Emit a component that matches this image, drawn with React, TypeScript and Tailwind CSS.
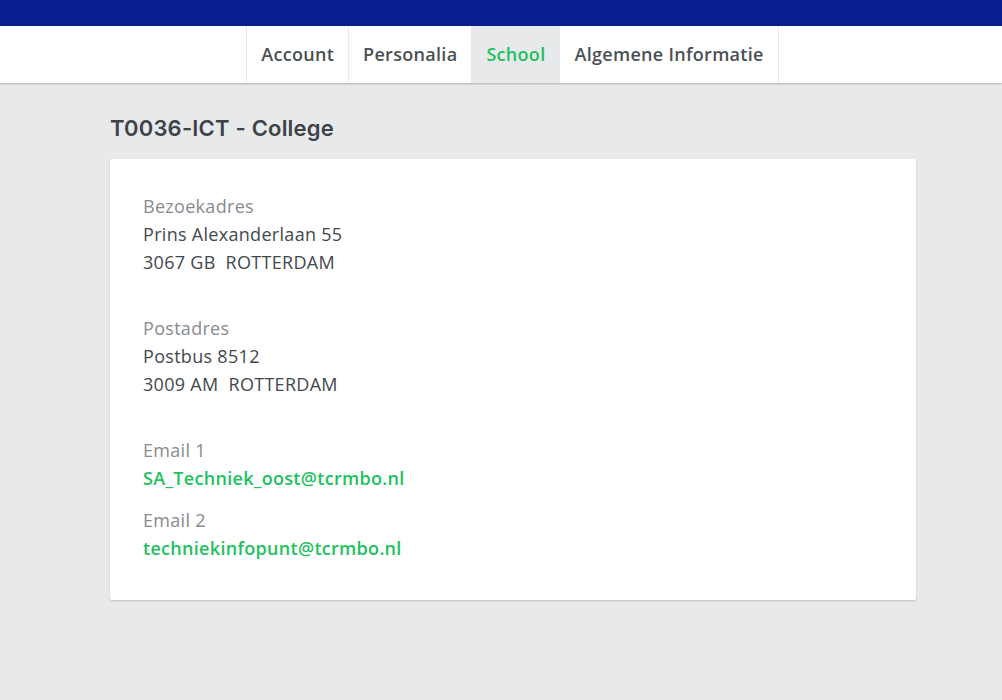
const TABS = ['Account', 'Personalia', 'School', 'Algemene Informatie'];

function Field({ label, lines, link }: { label: string; lines: string[]; link?: boolean }) {
  return (
    <div>
      <p className="text-[#868b90]">{label}</p>
      {lines.map((l) => (
        <p key={l} className={link ? 'font-semibold text-[#1ec15e]' : 'text-[#43484d] whitespace-pre'}>{l}</p>
      ))}
    </div>
  );
}

export default function App() {
  return (
    <div className="min-h-[700px] bg-[#e8e9eb] font-['Open_Sans',sans-serif] tracking-[0.3px]">
      <div className="h-[26px] bg-[#0a1f8f]" />
      <nav className="h-[57px] bg-white shadow-[0_1px_2px_rgba(0,0,0,0.25)] flex justify-center">
        <div className="flex ml-[23px] border-l border-r border-[#e8e9eb]">
          {TABS.map((t, i) => (
            <div key={t}
              className={`flex items-center px-[14px] text-[18px] font-semibold ${i > 0 ? 'border-l border-[#e8e9eb]' : ''} ${
                t === 'School' ? 'bg-[#e8e9eb] text-[#1ec15e]' : 'text-[#4a5056]'
              }`}>{t}</div>
          ))}
        </div>
      </nav>
      <div className="w-[806px] ml-[110px] pt-[30px]">
        <h1 className="font-['Inter',sans-serif] text-[22px] font-semibold text-[#3d4347] leading-[30px] mb-[16px] tracking-[0.2px]">T0036-ICT - College</h1>
        <div className="bg-white rounded-[2px] shadow-[0_1px_2px_rgba(0,0,0,0.2)] pl-[33px] pt-[33px] pb-[38px] text-[18px] leading-[28px]">
          <div className="flex flex-col gap-[38px]">
            <Field label="Bezoekadres" lines={['Prins Alexanderlaan 55', '3067 GB  ROTTERDAM']} />
            <Field label="Postadres" lines={['Postbus 8512', '3009 AM  ROTTERDAM']} />
            <div className="flex flex-col gap-[14px]">
              <Field label="Email 1" lines={['SA_Techniek_oost@tcrmbo.nl']} link />
              <Field label="Email 2" lines={['techniekinfopunt@tcrmbo.nl']} link />
            </div>
          </div>
        </div>
      </div>
    </div>
  );
}
